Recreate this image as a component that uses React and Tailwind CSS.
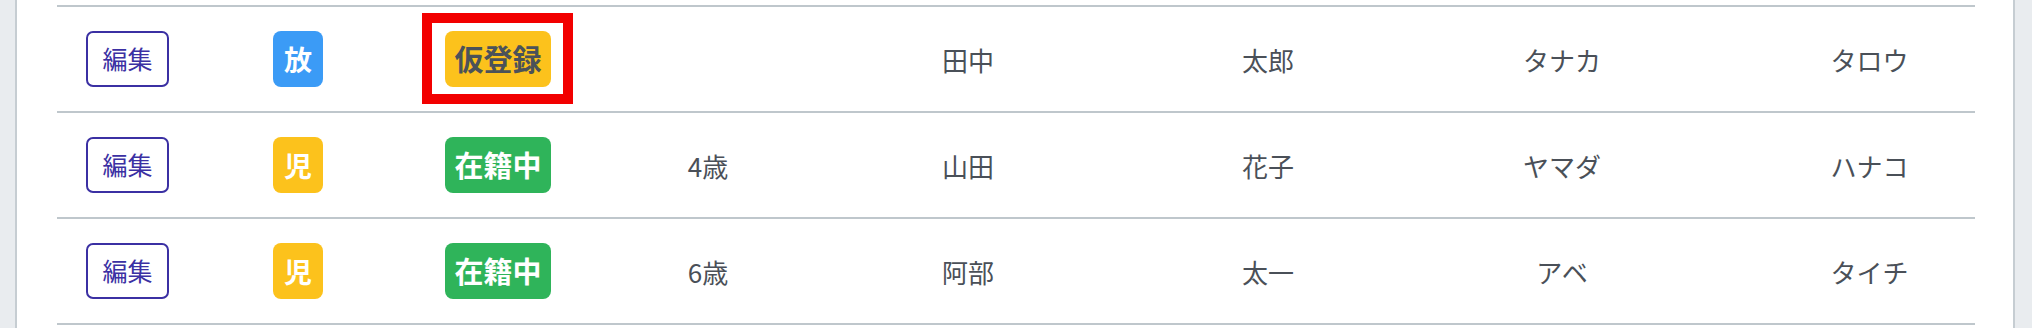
const ROWS = [
  { kind: "放", kindColor: "bg-[#3b9bf6]", status: "仮登録", statusStyle: "bg-[#fcc21c] text-[#4b5259]", marked: true, age: "", sei: "田中", mei: "太郎", kanaSei: "タナカ", kanaMei: "タロウ" },
  { kind: "児", kindColor: "bg-[#fcc21c]", status: "在籍中", statusStyle: "bg-[#2fb45a] text-white", marked: false, age: "4歳", sei: "山田", mei: "花子", kanaSei: "ヤマダ", kanaMei: "ハナコ" },
  { kind: "児", kindColor: "bg-[#fcc21c]", status: "在籍中", statusStyle: "bg-[#2fb45a] text-white", marked: false, age: "6歳", sei: "阿部", mei: "太一", kanaSei: "アベ", kanaMei: "タイチ" },
];

const FONT = "font-['Noto_Sans_CJK_JP','Noto_Sans',sans-serif]";

function Row({ row }) {
  return (
    <div className="grid h-[106px] grid-cols-[141px_200px_200px_220px_300px_300px_288px_1fr] items-center border-t-2 border-[#bfc7cc] text-[26px] text-[#4a5058]">
      <div className="flex justify-center">
        <button className="h-[56px] w-[83px] rounded-[7px] border-2 border-[#3b30a3] bg-white text-[25px] text-[#3b30a3]">
          編集
        </button>
      </div>
      <div className="flex justify-center">
        <span className={`flex h-[56px] w-[50px] items-center justify-center rounded-[8px] text-[28px] font-bold text-white ${row.kindColor}`}>
          {row.kind}
        </span>
      </div>
      <div className="flex justify-center">
        <span className="relative">
          <span className={`flex h-[56px] w-[106px] items-center justify-center rounded-[8px] text-[29px] font-bold ${row.statusStyle}`}>
            {row.status}
          </span>
          {row.marked && (
            <span className="pointer-events-none absolute -top-[18px] -bottom-[17px] -left-[23px] -right-[22px] border-[10px] border-[#f20000]" />
          )}
        </span>
      </div>
      <div className="text-center">{row.age}</div>
      <div className="text-center">{row.sei}</div>
      <div className="text-center">{row.mei}</div>
      <div className="text-center">{row.kanaSei}</div>
      <div className="pl-[58px] text-center">{row.kanaMei}</div>
    </div>
  );
}

export default function App() {
  return (
    <div className={`h-[328px] w-[2032px] overflow-hidden bg-[#e9ecef] pl-[15px] ${FONT}`}>
      <div className="h-full w-[2000px] border-x-2 border-[#c6cdd2] bg-white pl-[40px] pr-[38px] pt-[5px]">
        {ROWS.map((row, i) => (
          <Row key={i} row={row} />
        ))}
        <div className="border-t-2 border-[#bfc7cc]" />
      </div>
    </div>
  );
}
